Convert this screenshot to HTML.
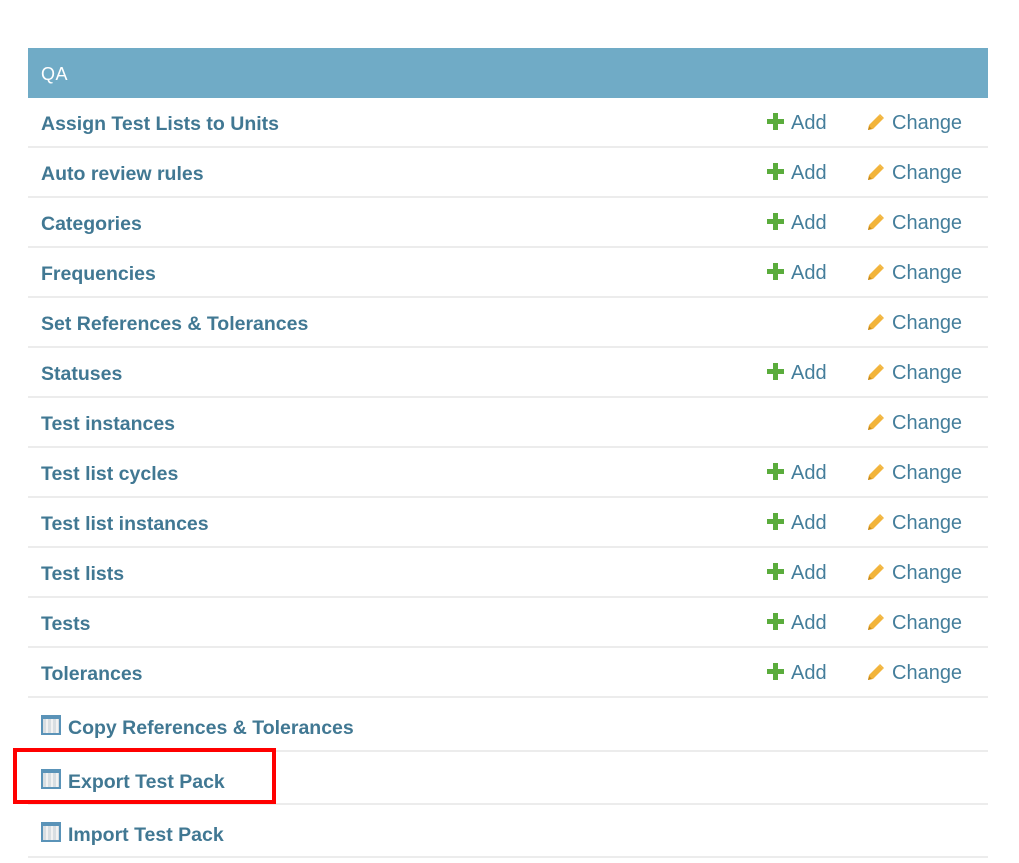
<!DOCTYPE html>
<html><head><meta charset="utf-8"><style>
body{margin:0;background:#fff;width:1019px;height:863px;position:relative;overflow:hidden;font-family:"Liberation Sans",sans-serif}
.hd{position:absolute;left:28px;top:48px;width:960px;height:50px;background:#70abc6;color:#fff;font-size:18px;line-height:53px;text-indent:13px;letter-spacing:0.5px}
.row{position:absolute;left:28px;width:960px;border-bottom:2px solid #ececec;box-sizing:border-box}
.n{position:absolute;left:13px;font-weight:bold;color:#417893;font-size:19.5px;white-space:nowrap}
.a,.c{position:absolute;color:#447e9b;font-size:20px;white-space:nowrap}
.a{left:739px}.c{left:839px}
.ic{display:inline-block;width:20px;height:20px;box-sizing:border-box;border:2px solid #5a93b8;background:repeating-linear-gradient(90deg,#d8dee2 0 3px,#f2f2f2 3px 5px);border-top-width:4px;vertical-align:-1px;margin-right:7px}
.box{position:absolute;left:13px;top:748px;width:263px;height:56px;border:4px solid #f00;box-sizing:border-box}
</style></head><body>
<div class="hd">QA</div>
<div id="rows"></div>
<script>
var d=[["Assign Test Lists to Units",1],["Auto review rules",1],["Categories",1],["Frequencies",1],["Set References &amp; Tolerances",0],["Statuses",1],["Test instances",0],["Test list cycles",1],["Test list instances",1],["Test lists",1],["Tests",1],["Tolerances",1]];
var plus='<svg width="17" height="17" viewBox="0 0 17 17" style="vertical-align:-1px;margin-right:7px"><path d="M6 0h5v6h6v5h-6v6h-5v-6h-6v-5h6z" fill="#5aac3c"/></svg>';
var pen='<svg width="18" height="18" viewBox="0 0 18 18" style="vertical-align:-2px;margin-right:7px"><path d="M1 17l1-5L12 2l4 4L6 16z" fill="#f2b43b"/><path d="M13 1l4 4-1 1-4-4z" fill="#f2b43b"/><path d="M1 17l1-4 3 3z" fill="#c98a1a"/></svg>';
var h='';
d.forEach(function(r,i){var t=98+i*50;
h+='<div class="row" style="top:'+t+'px;height:50px"><span class="n" style="top:15px">'+r[0]+'</span>'+(r[1]?'<span class="a" style="top:14px">'+plus+'Add</span>':'')+'<span class="c" style="top:14px">'+pen+'Change</span></div>';});
[["Copy References &amp; Tolerances",698,54],["Export Test Pack",752,53],["Import Test Pack",805,53]].forEach(function(r){
h+='<div class="row" style="top:'+r[1]+'px;height:'+r[2]+'px"><span class="n" style="top:17px"><span class="ic"></span>'+r[0]+'</span></div>';});
document.getElementById('rows').innerHTML=h;
</script>
<div class="box"></div>
</body></html>
